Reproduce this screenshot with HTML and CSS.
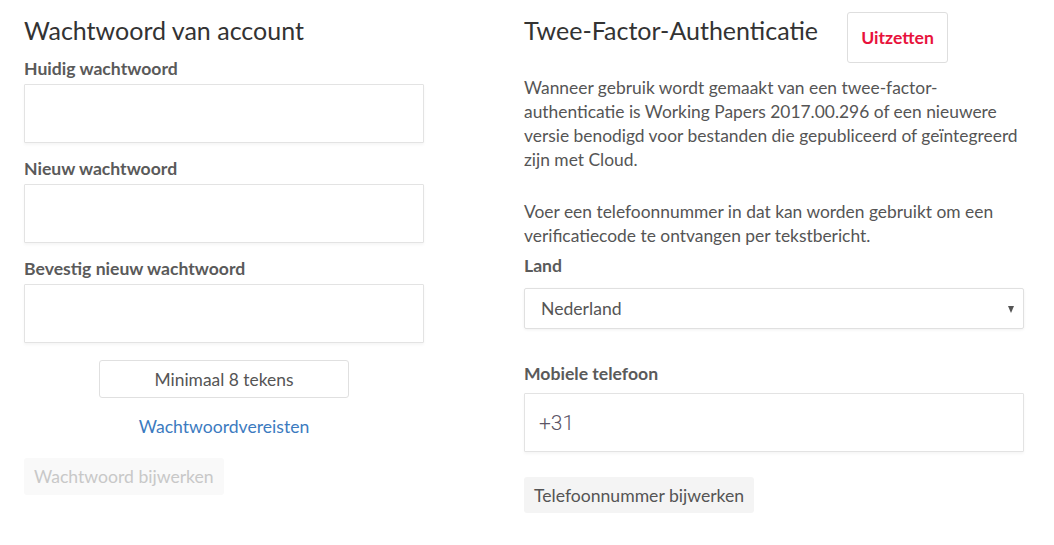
FILE: index.html
```html
<!DOCTYPE html>
<html lang="nl">
<head>
<meta charset="utf-8">
<title>Account</title>
<link rel="stylesheet" href="styles.css">
</head>
<body>
<main class="page">
  <section class="col col-left">
    <h2 class="title">Wachtwoord van account</h2>
    <label class="label">Huidig wachtwoord</label>
    <input class="field" type="password">
    <label class="label">Nieuw wachtwoord</label>
    <input class="field" type="password">
    <label class="label">Bevestig nieuw wachtwoord</label>
    <input class="field" type="password">
    <div class="hint-box">Minimaal 8 tekens</div>
    <a class="req-link" href="#">Wachtwoordvereisten</a>
    <button class="btn btn-disabled" type="button">Wachtwoord bijwerken</button>
  </section>
  <section class="col col-right">
    <div class="header-row">
      <h2 class="title">Twee-Factor-Authenticatie</h2>
      <button class="btn-off" type="button">Uitzetten</button>
    </div>
    <p class="text text-first">Wanneer gebruik wordt gemaakt van een twee-factor-authenticatie is Working Papers 2017.00.296 of een nieuwere versie benodigd voor bestanden die gepubliceerd of geïntegreerd zijn met Cloud.</p>
    <p class="text text-second">Voer een telefoonnummer in dat kan worden gebruikt om een verificatiecode te ontvangen per tekstbericht.</p>
    <label class="label label-land">Land</label>
    <div class="select-wrap">
      <div class="select">Nederland</div>
    </div>
    <label class="label label-phone">Mobiele telefoon</label>
    <div class="field phone">+31</div>
    <button class="btn btn-grey" type="button">Telefoonnummer bijwerken</button>
  </section>
</main>
</body>
</html>
```

FILE: styles.css
```css
* { box-sizing: border-box; }
html, body { margin: 0; padding: 0; background: #fff; }
body {
  font-family: Lato, "Open Sans", sans-serif;
  color: #555;
}
.page {
  display: flex;
  gap: 100px;
  padding: 0 24px;
}
.col { display: flex; flex-direction: column; align-items: flex-start; }
.col-left { width: 400px; padding-top: 15px; }
.col-right { width: 500px; padding-top: 12px; }

.title {
  margin: 0;
  font-size: 25px;
  line-height: 30px;
  font-weight: 400;
  color: #333;
}
.col-left .title { margin-bottom: 12px; }

.label {
  display: block;
  font-size: 17.6px;
  line-height: 24px;
  font-weight: 700;
  color: #5a5a5a;
  margin-bottom: 3px;
}
.field {
  display: block;
  width: 100%;
  height: 59px;
  border: 1px solid #e3e3e3;
  border-radius: 1px;
  background: #fff;
  box-shadow: 0 2px 3px rgba(0,0,0,0.04);
  margin: 0 0 14px 0;
  padding: 0 14px;
  font-family: inherit;
  font-size: 17.6px;
  outline: none;
}
.hint-box {
  align-self: center;
  margin-top: 3px;
  width: 250px;
  height: 38px;
  border: 1px solid #e0e0e0;
  border-radius: 3px;
  display: flex;
  align-items: center;
  justify-content: center;
  font-size: 17.4px;
  color: #555;
}
.req-link {
  align-self: center;
  margin-top: 17px;
  font-size: 17.6px;
  line-height: 24px;
  color: #3c7bbf;
  text-decoration: none;
}
.btn {
  font-family: inherit;
  font-size: 17.6px;
  border: none;
  border-radius: 3px;
  padding: 0 10px;
  height: 37px;
  cursor: pointer;
}
.btn-disabled {
  margin-top: 19px;
  background: #f9f9f9;
  color: #c8c8c8;
}

.header-row {
  display: flex;
  align-items: flex-start;
  gap: 29px;
}
.header-row .title { margin-top: 3px; }
.btn-off {
  width: 101px;
  height: 51px;
  background: #fff;
  border: 1px solid #dedede;
  border-radius: 3px;
  font-family: inherit;
  font-size: 17.6px;
  font-weight: 700;
  color: #e8123c;
  cursor: pointer;
}
.text {
  margin: 0;
  font-size: 17.4px;
  line-height: 24px;
  color: #555;
}
.text-first { margin-top: 13px; }
.text-second { margin-top: 28px; }
.label-land { margin-top: 6px; margin-bottom: 10px; }
.select-wrap {
  position: relative;
  width: 100%;
}
.select {
  height: 41px;
  border: 1px solid #e0e0e0;
  border-radius: 2px;
  box-shadow: 0 1px 3px rgba(0,0,0,0.06);
  padding-left: 16px;
  display: flex;
  align-items: center;
  font-size: 17.6px;
  color: #555;
}
.select-wrap::after {
  content: "";
  position: absolute;
  right: 10px;
  top: 18px;
  border-left: 3.5px solid transparent;
  border-right: 3.5px solid transparent;
  border-top: 7px solid #555;
}
.label-phone { margin-top: 33px; margin-bottom: 7px; }
.phone {
  display: flex;
  align-items: center;
  padding-left: 14px;
  font-family: Roboto, "Liberation Sans", sans-serif;
  font-weight: 300;
  font-size: 21px;
  color: #5b5566;
  margin-bottom: 25px;
}
.btn-grey {
  height: 36px;
  background: #f4f4f4;
  color: #555;
}
```
